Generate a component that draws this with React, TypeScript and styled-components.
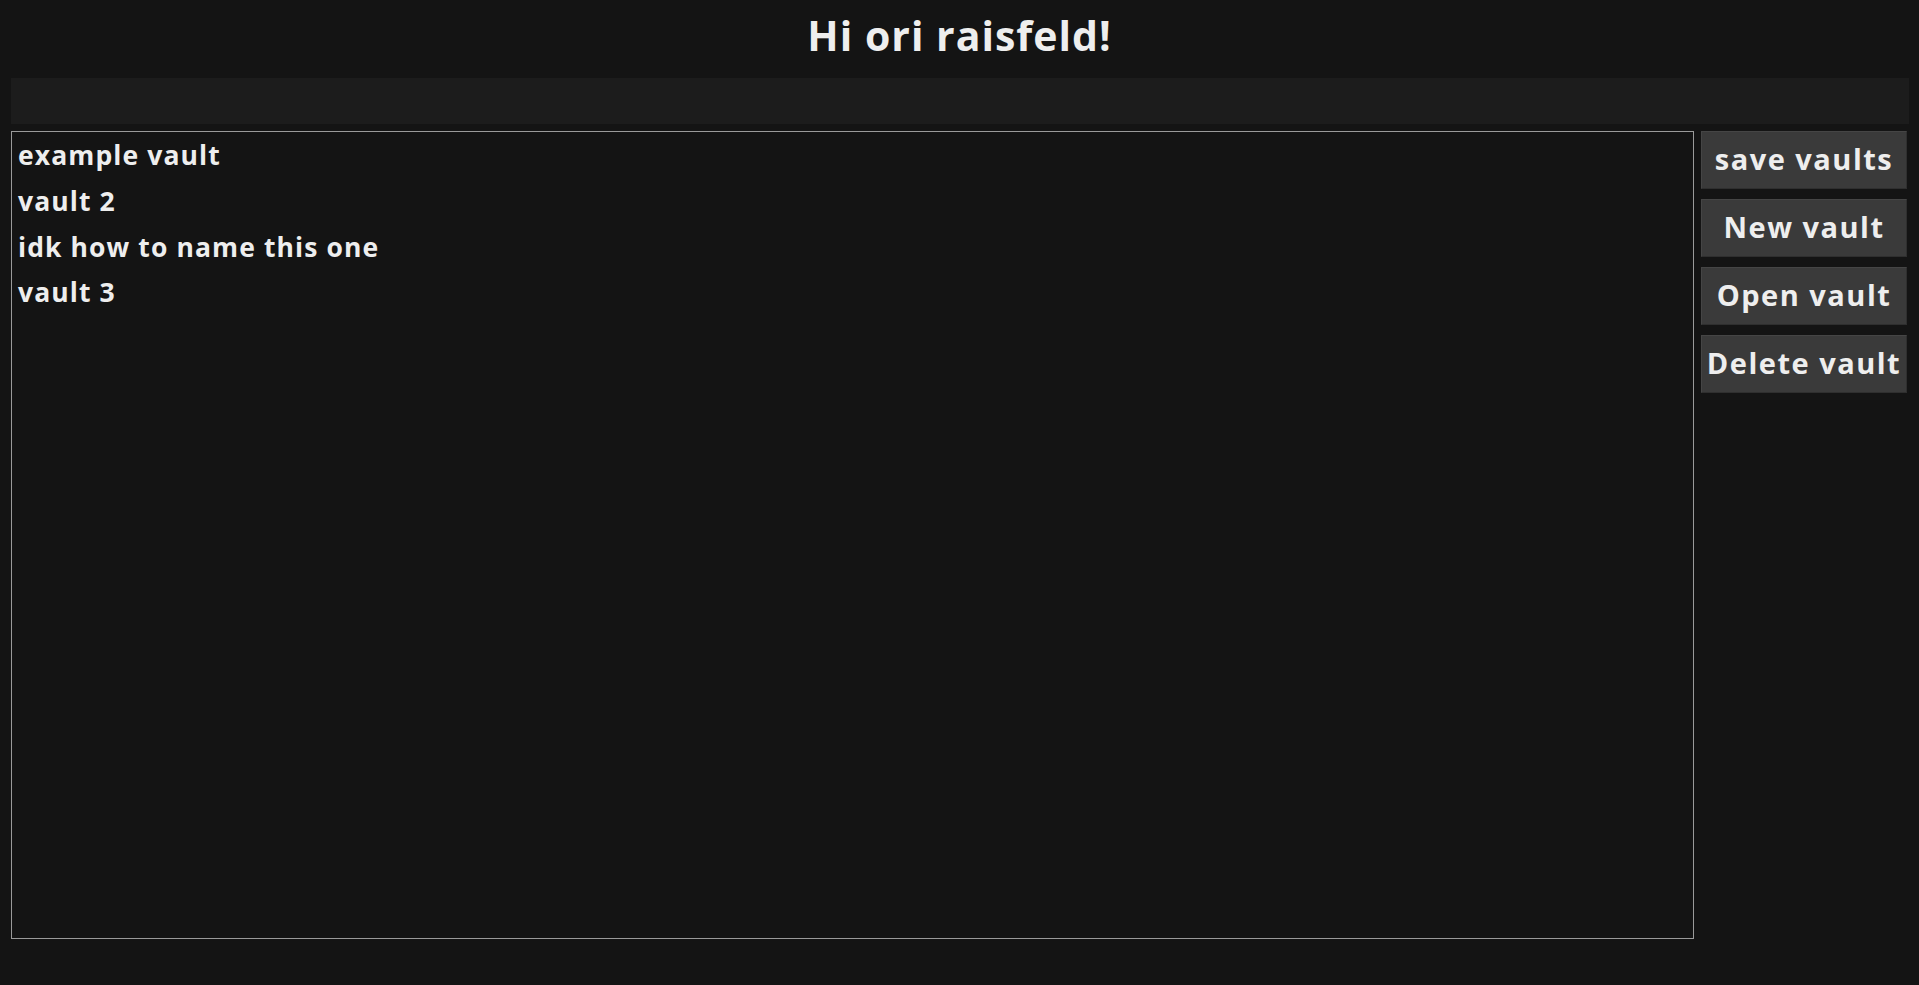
import React from "react";
import styled, { createGlobalStyle } from "styled-components";

const GlobalStyle = createGlobalStyle`
  html, body {
    margin: 0;
    padding: 0;
    background: #141414;
    color: #eeeeee;
    font-family: "Open Sans", "Noto Sans", "Liberation Sans", sans-serif;
  }
  * { box-sizing: border-box; }
`;

const Page = styled.div`
  display: flex;
  flex-direction: column;
  height: 985px;
  background: #141414;
`;

const Title = styled.h1`
  margin: 0;
  padding-top: 11px;
  height: 78px;
  text-align: center;
  font-size: 41px;
  line-height: 48px;
  font-weight: 700;
  letter-spacing: 1px;
  color: #eeeeee;
`;

const SearchBar = styled.div`
  height: 46px;
  margin: 0 10px 0 11px;
  background: #1c1c1c;
`;

const Main = styled.div`
  display: flex;
  gap: 7px;
  padding: 7px 12px 0 11px;
`;

const VaultList = styled.ul`
  flex: 1;
  height: 808px;
  margin: 0;
  padding: 1px 6px;
  list-style: none;
  border: 1px solid #9a9a9a;
  background: #141414;
`;

const VaultItem = styled.li`
  font-size: 26.5px;
  line-height: 45.8px;
  font-weight: 700;
  letter-spacing: 1.1px;
  color: #eeeeee;
  white-space: nowrap;
`;

const Actions = styled.div`
  width: 206px;
  display: flex;
  flex-direction: column;
  gap: 10px;
`;

const ActionButton = styled.button`
  height: 58px;
  width: 206px;
  padding: 0 0 4px 0;
  background: #3a3a3a;
  border: 1px solid #454545;
  border-bottom-color: #2f2f2f;
  border-right-color: #2f2f2f;
  color: #eeeeee;
  font-family: "Open Sans", "Noto Sans", "Liberation Sans", sans-serif;
  font-size: 29px;
  font-weight: 700;
  letter-spacing: 1.5px;
  white-space: nowrap;
  overflow: visible;
  display: flex;
  align-items: center;
  justify-content: center;
  cursor: pointer;
`;

const vaults = ["example vault", "vault 2", "idk how to name this one", "vault 3"];
const actions = ["save vaults", "New vault", "Open vault", "Delete vault"];

export default function App() {
  return (
    <>
      <GlobalStyle />
      <Page>
        <Title>Hi ori raisfeld!</Title>
        <SearchBar />
        <Main>
          <VaultList>
            {vaults.map((v) => (
              <VaultItem key={v}>{v}</VaultItem>
            ))}
          </VaultList>
          <Actions>
            {actions.map((a) => (
              <ActionButton key={a}>{a}</ActionButton>
            ))}
          </Actions>
        </Main>
      </Page>
    </>
  );
}
